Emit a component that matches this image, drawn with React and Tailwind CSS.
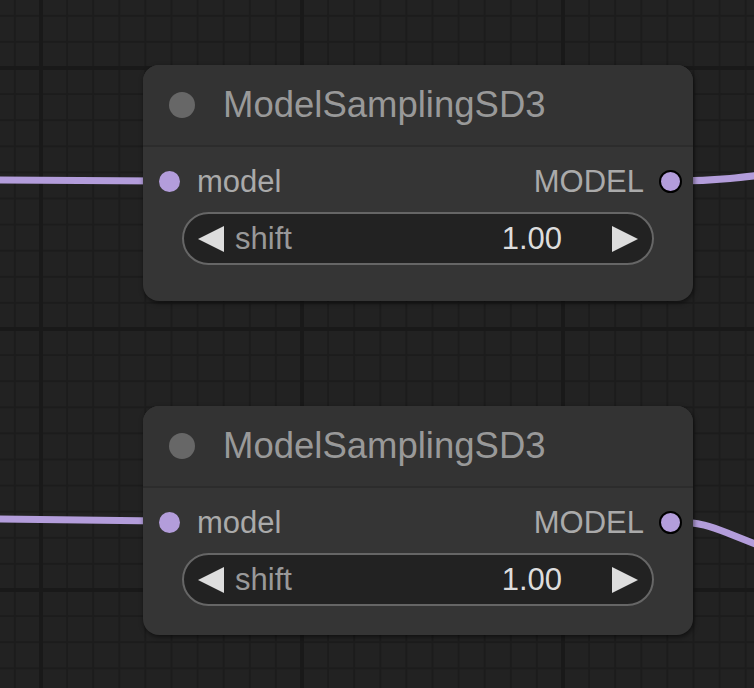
const LINK = '#b39ddb';

const Arrow = ({ dir }) => (
  <svg width="26" height="26" viewBox="0 0 26 26" className="shrink-0">
    {dir === 'left' ? (
      <polygon points="26,0 26,26 0,13" fill="#dddddd" />
    ) : (
      <polygon points="0,0 0,26 26,13" fill="#dddddd" />
    )}
  </svg>
);

const SamplingNode = ({ className }) => (
  <div
    className={`absolute left-[143px] w-[550px] flex flex-col rounded-[16px] bg-[#353535] shadow-[1px_2px_5px_rgba(0,0,0,0.55)] ${className}`}
  >
    <div className="h-[82px] flex items-center gap-[28px] pl-[26px] rounded-t-[16px] bg-[#333333] border-b-2 border-[#2c2c2c]">
      <div className="w-[26px] h-[26px] rounded-full bg-[#676767]" />
      <span className="text-[36.5px] leading-none text-[#999999]">ModelSamplingSD3</span>
    </div>

    <div className="mt-[8px] h-[52px] flex items-center justify-between pl-[16px] pr-[11px]">
      <div className="flex items-center gap-[17px]">
        <div className="w-[21px] h-[21px] rounded-full bg-[#b39ddb]" />
        <span className="text-[31px] leading-none text-[#aaaaaa]">model</span>
      </div>
      <div className="flex items-center gap-[15px]">
        <span className="text-[31px] leading-none text-[#aaaaaa]">MODEL</span>
        <div className="w-[23px] h-[23px] rounded-full bg-[#b39ddb] border-2 border-black" />
      </div>
    </div>

    <div className="mt-[5px] mx-[39px] h-[53px] flex items-center px-[14px] rounded-full border-2 border-[#666666] bg-[#222222]">
      <Arrow dir="left" />
      <span className="ml-[11px] flex-1 text-[31px] leading-none text-[#999999]">shift</span>
      <span className="mr-[50px] text-[31px] leading-none text-[#dddddd]">1.00</span>
      <Arrow dir="right" />
    </div>
  </div>
);

export default function App() {
  return (
    <div className="relative w-[754px] h-[688px] overflow-hidden bg-[#222222] font-['Liberation_Sans',Arial,sans-serif]">
      <svg className="absolute inset-0" width="754" height="688">
        <defs>
          <pattern id="minor" patternUnits="userSpaceOnUse" x="40" y="67" width="26.1" height="26.1">
            <rect x="0" y="0" width="2" height="26.1" fill="#1c1c1c" />
            <rect x="0" y="0" width="26.1" height="2" fill="#1c1c1c" />
          </pattern>
          <pattern id="major" patternUnits="userSpaceOnUse" x="39" y="66" width="261" height="261">
            <rect x="0" y="0" width="4" height="261" fill="#191919" />
            <rect x="0" y="0" width="261" height="4" fill="#191919" />
          </pattern>
        </defs>
        <rect width="754" height="688" fill="url(#minor)" />
        <rect width="754" height="688" fill="url(#major)" />

        <g fill="none" stroke={LINK} strokeWidth="7">
          <path d="M-10 180 L160 181" />
          <path d="M675 181 C 715 181, 740 178, 800 170" />
          <path d="M-10 519 L160 521" />
          <path d="M675 522 C 700 522, 712 527, 730 534 S 770 550, 800 562" />
        </g>
      </svg>

      <SamplingNode className="top-[65px] h-[236px]" />
      <SamplingNode className="top-[406px] h-[229px]" />
    </div>
  );
}
